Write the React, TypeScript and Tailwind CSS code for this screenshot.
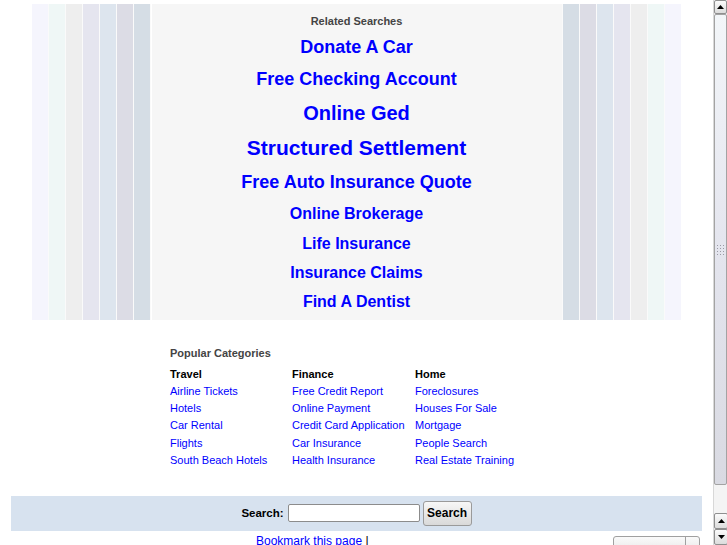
import React from "react";

const leftStripes = ["#f5f5fd", "#eff7f6", "#eeeeee", "#e5e5ef", "#dde5ee", "#dcdce5", "#d5dde5"];
const rightStripes = [...leftStripes].reverse();

const related = [
  { text: "Donate A Car", size: "text-[18px]", h: "h-[32px]" },
  { text: "Free Checking Account", size: "text-[18px]", h: "h-[32px]" },
  { text: "Online Ged", size: "text-[20px]", h: "h-[36px]" },
  { text: "Structured Settlement", size: "text-[21px]", h: "h-[34px]" },
  { text: "Free Auto Insurance Quote", size: "text-[18px]", h: "h-[34px]" },
  { text: "Online Brokerage", size: "text-[16px]", h: "h-[30px]" },
  { text: "Life Insurance", size: "text-[16px]", h: "h-[29px]" },
  { text: "Insurance Claims", size: "text-[16px]", h: "h-[29px]" },
  { text: "Find A Dentist", size: "text-[16px]", h: "h-[29px]" },
];

const categories = [
  { title: "Travel", links: ["Airline Tickets", "Hotels", "Car Rental", "Flights", "South Beach Hotels"] },
  { title: "Finance", links: ["Free Credit Report", "Online Payment", "Credit Card Application", "Car Insurance", "Health Insurance"] },
  { title: "Home", links: ["Foreclosures", "Houses For Sale", "Mortgage", "People Search", "Real Estate Training"] },
];

function Arrow({ up }: { up?: boolean }) {
  return (
    <svg width="7" height="4" viewBox="0 0 7 4">
      {up ? <polygon points="0,4 7,4 3.5,0" fill="#000" /> : <polygon points="0,0 7,0 3.5,4" fill="#000" />}
    </svg>
  );
}

function ScrollButton({ up }: { up?: boolean }) {
  return (
    <div className="shrink-0 h-[16px] w-[14px] flex items-center justify-center border border-[#8f8f8f] rounded-[2px] bg-gradient-to-b from-[#fbfbfb] to-[#dcdcdc]">
      <Arrow up={up} />
    </div>
  );
}

function Scrollbar() {
  return (
    <div className="shrink-0 w-[14px] h-full flex flex-col bg-[#efeff1] border-l border-[#d8d8d8]">
      <div className="shrink-0 h-[14px] flex items-center justify-center border border-[#8f8f8f] rounded-[2px] bg-gradient-to-b from-[#fbfbfb] to-[#dcdcdc]">
        <Arrow up />
      </div>
      <div className="shrink-0 h-[471px] border border-[#a3a3a3] rounded-[2px] bg-gradient-to-b from-[#f3f6f9] via-[#e4e5ee] to-[#d9dae2] flex items-center justify-center">
        <div className="grid grid-cols-3 gap-[2px]">
          {Array.from({ length: 12 }).map((_, i) => (
            <div key={i} className="w-[1px] h-[1px] bg-[#9a9aa4]" />
          ))}
        </div>
      </div>
      <div className="flex-1 bg-[#f4f4f4]" />
      <ScrollButton up />
      <ScrollButton />
    </div>
  );
}

export default function App() {
  return (
    <div className="w-[727px] h-[545px] overflow-hidden flex bg-white" style={{ fontFamily: '"Liberation Sans", Arial, sans-serif' }}>
      <div className="flex-1 flex flex-col pt-[4px] overflow-hidden">
        {/* striped related-searches panel */}
        <div className="shrink-0 mx-auto w-[650px] h-[316px] flex">
          <div className="w-[120px] flex">
            {leftStripes.map((c, i) => (
              <div key={i} className="flex-1 border-r border-[#fafafa]" style={{ backgroundColor: c }} />
            ))}
          </div>
          <div className="w-[410px] bg-[#f6f6f6] flex flex-col items-center">
            <div className="shrink-0 pt-[10px] h-[27px] text-[11px] leading-[14px] font-bold text-[#444]">Related Searches</div>
            {related.map((r) => (
              <a key={r.text} href="#" className={`shrink-0 ${r.h} ${r.size} flex items-center font-bold text-[#0000ff]`}>
                {r.text}
              </a>
            ))}
          </div>
          <div className="w-[120px] flex">
            {rightStripes.map((c, i) => (
              <div key={i} className="flex-1 border-l border-[#fafafa]" style={{ backgroundColor: c }} />
            ))}
          </div>
        </div>

        {/* popular categories */}
        <div className="shrink-0 mx-auto w-[373px] mt-[25px] text-[11px]">
          <div className="h-[17px] leading-[17px] font-bold text-[#444] mb-[4px]">Popular Categories</div>
          <div className="grid grid-cols-[122px_123px_1fr]">
            {categories.map((cat) => (
              <div key={cat.title} className="flex flex-col">
                <div className="h-[17px] leading-[17px] font-bold text-black">{cat.title}</div>
                {cat.links.map((l) => (
                  <a key={l} href="#" className="h-[17.2px] leading-[17.2px] text-[#0000ff] whitespace-nowrap">
                    {l}
                  </a>
                ))}
              </div>
            ))}
          </div>
        </div>

        {/* search band */}
        <div className="shrink-0 mx-auto w-[691px] mt-[27px] h-[35px] bg-[#d7e2ef] flex items-center justify-center gap-[3px]">
          <span className="text-[11.5px] font-bold text-black mr-[1px]">Search:</span>
          <input className="w-[132px] h-[18px] bg-white border border-[#8c8c8c] rounded-[2px]" />
          <button className="w-[49px] h-[25px] border border-[#9a9a9a] rounded-[3px] bg-gradient-to-b from-[#f7f7f7] to-[#d9d9d9] text-[12px] font-bold text-black">
            Search
          </button>
        </div>

        <div className="shrink-0 mx-auto w-[691px] mt-[3px] flex items-start">
          <div className="pl-[245px] text-[12px] leading-[14px] text-[#0000ff]">
            <a href="#" className="underline">Bookmark this page</a> <span className="text-black">|</span>
          </div>
          <div className="ml-auto mr-[2px] mt-[2px] w-[87px] h-[22px] flex border border-[#a0a0a0] rounded-[3px] bg-gradient-to-b from-[#fafafa] to-[#e2e2e2] text-[12px]">
            <span className="flex-1 pl-[10px] pt-[4px] text-black">English</span>
            <span className="w-[14px] border-l border-[#a0a0a0]" />
          </div>
        </div>
      </div>
      <Scrollbar />
    </div>
  );
}
